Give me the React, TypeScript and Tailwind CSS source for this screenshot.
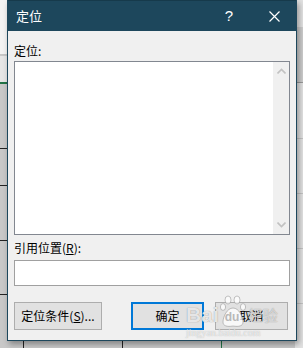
const cjk = "font-['Microsoft_YaHei','Noto_Sans_CJK_SC',sans-serif]"

function Chevron({ down }: { down?: boolean }) {
  return (
    <svg width="9" height="6" viewBox="0 0 9 6" className="block">
      <path
        d={down ? 'M0.5 0.5 L4.5 4.5 L8.5 0.5' : 'M0.5 5.5 L4.5 1.5 L8.5 5.5'}
        fill="none"
        stroke="#c2c2c2"
        strokeWidth="1.6"
      />
    </svg>
  )
}

function Button({ label, primary, className }: { label: React.ReactNode; primary?: boolean; className?: string }) {
  return (
    <div
      className={`h-[28px] flex items-center justify-center bg-[#e1e1e1] text-[12px] text-black ${
        primary ? 'border-2 border-[#0078d7]' : 'border border-[#adadad]'
      } ${className ?? ''}`}
    >
      {label}
    </div>
  )
}

// paw logo of the watermark
function Paw() {
  return (
    <svg width="26" height="34" viewBox="0 0 26 34" className="block">
      <g fill="rgba(255,255,255,0.75)" stroke="rgba(130,130,130,0.6)" strokeWidth="0.8">
        <ellipse cx="8" cy="5" rx="3" ry="4" />
        <ellipse cx="17" cy="5" rx="3" ry="4" />
        <ellipse cx="3" cy="12" rx="2.6" ry="3.4" />
        <ellipse cx="23" cy="12" rx="2.6" ry="3.4" />
        <path d="M13 13 C7 13 3 22 3 27 C3 31 7 32 13 31 C19 32 23 31 23 27 C23 22 19 13 13 13 Z" />
      </g>
    </svg>
  )
}

export default function App() {
  return (
    <div className={`relative w-[303px] h-[348px] overflow-hidden bg-[#c8c8c8] ${cjk}`}>
      {/* spreadsheet behind the dialog */}
      <div className="absolute left-0 top-0 w-[8px] h-[55px] bg-[#f3f3f3] border-b border-[#c6c6c6]" />
      <div className="absolute left-0 top-[56px] w-[8px] h-[26px] bg-[#e6e6e6]" />
      <div className="absolute left-0 top-[82px] w-[8px] h-[2px] bg-[#217346]" />
      <div className="absolute left-0 top-[148px] w-[8px] h-px bg-[#222]" />
      <div className="absolute left-0 top-[185px] w-[8px] h-px bg-[#222]" />
      <div className="absolute left-0 top-[240px] w-[8px] h-px bg-[#222]" />
      <div className="absolute left-0 top-[294px] w-[8px] h-px bg-[#222]" />
      <div className="absolute right-0 top-0 w-[8px] h-[348px] bg-[#e2e2e2]" />
      <div className="absolute right-0 top-[27px] w-[7px] h-[56px] bg-[#cdcdcd] border-b border-[#9a9a9a]" />
      <div className="absolute right-0 top-[138px] w-[7px] h-px bg-[#c4c4c4]" />
      <div className="absolute right-0 top-[193px] w-[7px] h-px bg-[#c4c4c4]" />
      <div className="absolute right-0 top-[248px] w-[7px] h-px bg-[#c4c4c4]" />
      <div className="absolute right-0 top-[303px] w-[7px] h-px bg-[#c4c4c4]" />
      <div className="absolute left-[23px] top-[330px] w-px h-[18px] bg-[#222]" />
      <div className="absolute left-[122px] top-[330px] w-px h-[18px] bg-[#222]" />
      <div className="absolute left-[221px] top-[330px] w-px h-[18px] bg-[#217346]" />

      {/* dialog */}
      <div className="relative ml-[7px] w-[290px] h-[341px] flex flex-col bg-[#f0f0f0] border border-t-0 border-[#1d475c] shadow-[2px_3px_6px_rgba(0,0,0,0.35)]">
        <div className="h-[31px] flex items-center bg-[#1d475c] border-t border-[#163a4b] text-white">
          <span className="pl-[8px] text-[13px]">定位</span>
          <span className="ml-auto mr-[36px] text-[15px] font-['Liberation_Sans',sans-serif] font-light">?</span>
          <svg width="11" height="11" viewBox="0 0 11 11" className="mr-[16px]">
            <path d="M0.5 0.5 L10.5 10.5 M10.5 0.5 L0.5 10.5" stroke="white" strokeWidth="1.2" />
          </svg>
        </div>

        <div className="flex flex-col px-[6px] pt-[10px]">
          <div className="h-[20px] flex items-center text-[12px] text-black">定位:</div>
          <div className="h-[174px] border border-[#828790] bg-white flex justify-end">
            <div className="w-[16px] bg-[#f0f0f0] flex flex-col items-center justify-between py-[6px]">
              <Chevron />
              <Chevron down />
            </div>
          </div>
          <div className="h-[25px] flex items-center text-[12px] text-black">
            引用位置(<span className="underline">R</span>):
          </div>
          <div className="h-[26px] border border-[#a0a0a0] bg-white" />
          <div className="mt-[16px] flex items-center pr-[2px]">
            <Button className="w-[88px]" label={<>定位条件(<span className="underline">S</span>)...</>} />
            <Button className="ml-auto w-[73px]" primary label="确定" />
            <Button className="ml-[11px] w-[73px]" label="取消" />
          </div>
        </div>
      </div>

      {/* baidu watermark */}
      <div className="absolute left-[186px] top-[295px] flex flex-col pointer-events-none">
        <div className="flex items-end h-[34px]">
          <span className="text-[21px] leading-[24px] mb-[2px] font-bold font-['Liberation_Sans',sans-serif] text-white/80 [text-shadow:0_0_1px_rgba(110,110,110,0.9)]">
            Bai
          </span>
          <div className="relative ml-[1px]">
            <Paw />
            <span className="absolute left-[5px] top-[15px] text-[12px] leading-[14px] font-bold font-['Liberation_Sans',sans-serif] text-[#b8b8b8]">
              du
            </span>
          </div>
          <span className="ml-[2px] mb-[5px] text-[15px] leading-[18px] text-white/60 [text-shadow:0_0_1px_rgba(110,110,110,0.8)]">
            经验
          </span>
        </div>
        <div className="mt-[-2px] text-[10px] leading-[11px] font-['Liberation_Serif',serif] text-white/70 [text-shadow:0_0_1px_rgba(120,120,120,0.6)]">
          jingyan.baidu.com
        </div>
      </div>
    </div>
  )
}
